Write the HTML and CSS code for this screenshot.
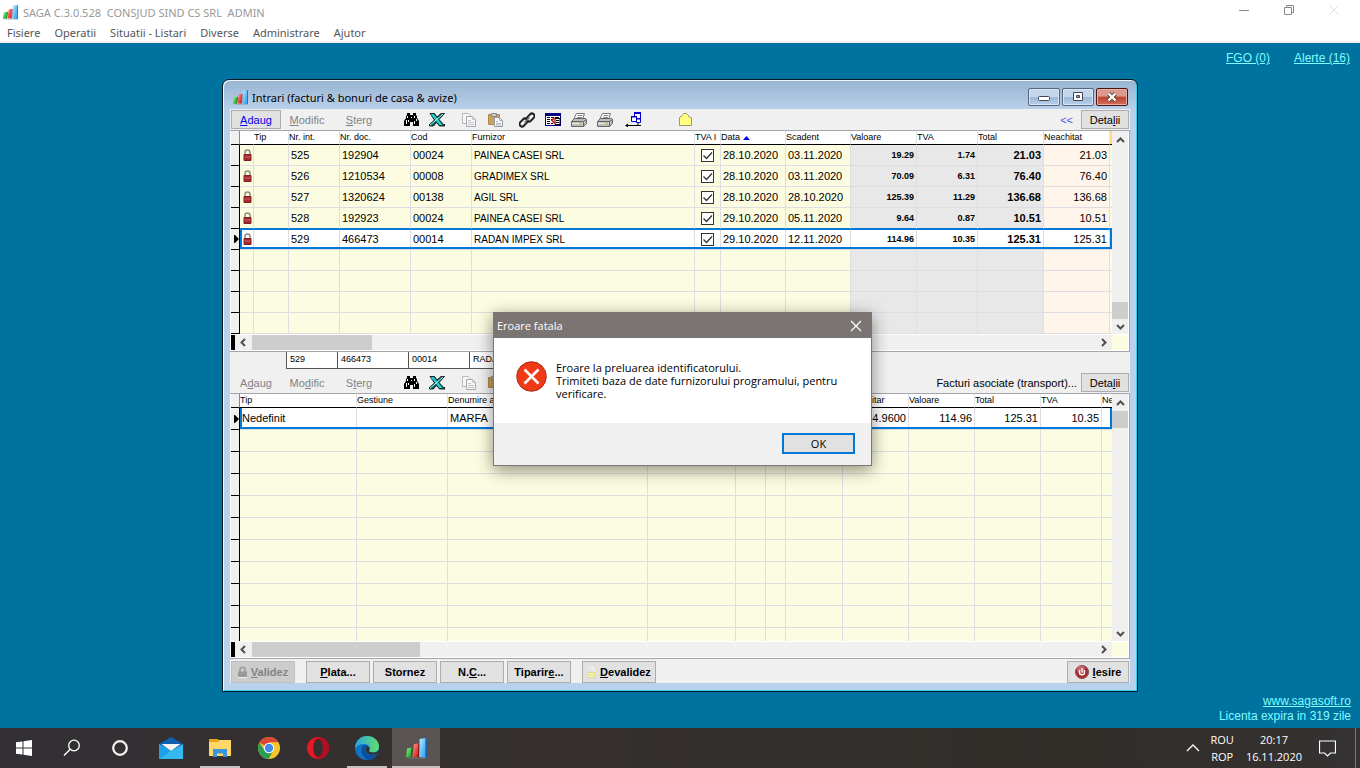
FILE: index.html
```html
<!DOCTYPE html>
<html lang="ro">
<head>
<meta charset="utf-8">
<title>SAGA C.3.0.528</title>
<link rel="stylesheet" href="styles.css">
</head>
<body>
<svg class="defs" aria-hidden="true">
  <defs>
    <linearGradient id="gb" x1="0" y1="0" x2="1" y2="1"><stop offset="0" stop-color="#c4f0ff"/><stop offset=".5" stop-color="#6cc4f8"/><stop offset="1" stop-color="#2c9cf0"/></linearGradient>
    <linearGradient id="gr" x1="0" y1="0" x2="1" y2="1"><stop offset="0" stop-color="#ffa090"/><stop offset="1" stop-color="#d80f12"/></linearGradient>
    <linearGradient id="gg" x1="0" y1="0" x2="1" y2="1"><stop offset="0" stop-color="#8bf08b"/><stop offset="1" stop-color="#0ba01d"/></linearGradient>
    <linearGradient id="ge" x1="0" y1="0" x2="1" y2="0"><stop offset="0" stop-color="#2aa5e0"/><stop offset="1" stop-color="#5fe06a"/></linearGradient>
  </defs>
  <symbol id="saga" viewBox="0 0 20 20">
    <path d="M1 10l4.500-1-.5 9-5 .500z" fill="url(#gg)"/><path d="M5.500 9l1 .7L5.500 18H4.500z" fill="#066b14"/>
    <path d="M7.500 6l4.500-1-.8 13H6z" fill="url(#gr)"/><path d="M12 5l1 .7-.8 12.300h-1z" fill="#8d0c10"/>
    <path d="M13 1L18.700 0v19l-6.200-.8z" fill="url(#gb)"/><path d="M18.700 0l1.100.8V19h-1.100z" fill="#1464b4"/>
    <path d="M1 18.500h12l5 .500v1H5z" fill="#8a8a8a" opacity=".4"/>
  </symbol>
  <symbol id="bino" viewBox="0 0 15 13"><path d="M3 0h3v2h3V0h3v2l1 1v2l2 3v5H9V9H6v4H0V8l2-3V3l1-1z" fill="#000"/><path d="M3 3h1v2H3zM10 3h1v2h-1zM2 7h1v4H2zM4 7h1v2H4zM10 8h1v3h-1zM7 4h1v1H7zM12 6h1v2h-1z" fill="#fff"/></symbol>
  <symbol id="xls" viewBox="0 0 16 14"><path d="M1 .500h4.500L8 4l4-3.500h3.500L10 6.500l4.500 5H16v1.500h-5.500L7.500 9.500 4.500 13H.5V11.500L5.500 7z" fill="#0b6060" stroke="#000" stroke-width=".8"/><path d="M1.500 1h3l9 11h-3z" fill="#23d3d3"/><path d="M14 1L1 12.300" stroke="#b6ffff" stroke-width="1"/></symbol>
  <symbol id="copy" viewBox="0 0 14 14"><path d="M.5.500h6l2 2v8h-8z" fill="#f6f6f6" stroke="#b9b9b9"/><path d="M4.500 3.500h6l3 3v7h-9z" fill="#f8f8f8" stroke="#a8a8a8"/><path d="M10.500 3.500v3h3M6 7.500h3M6 9.500h6M6 11.500h6" stroke="#b9c6d2" fill="none"/></symbol>
  <symbol id="paste" viewBox="0 0 15 14"><path d="M.5 1.500h11v10H.5z" fill="#c8a060" stroke="#b08a4a"/><path d="M3.500.500h5v3h-5z" fill="#ccc" stroke="#888"/><path d="M6.500 4.500h5l3 3v6h-8z" fill="#f8f8f8" stroke="#999"/><path d="M11.500 4.500v3h3M8 8.500h2M8 10.500h5M8 12h5" stroke="#a9b6c2" fill="none"/></symbol>
  <symbol id="link" viewBox="0 0 16 16"><g fill="none" stroke="#222" stroke-width="2"><rect x="7" y="3" width="9" height="5" rx="2.500" transform="rotate(-45 11.500 5.500)"/><rect x="0" y="8" width="9" height="5" rx="2.500" transform="rotate(-45 4.500 10.500)"/></g><path d="M5.500 10.500l5-5" stroke="#777" stroke-width="1.400"/></symbol>
  <symbol id="form" viewBox="0 0 16 13"><path d="M0 0h16v13H0z" fill="#000080"/><path d="M1 3h14v9H1z" fill="#fff"/><path d="M2 4h3v1H2zM6 4h3v1H6zM2 6h3v1H2zM6 6h2v1H6zM2 8h3v1H2zM2 10h3v1H2zM6 10h2v1H6zM10 4h4v1h-4z" fill="#000"/><path d="M10 5.500h5v6h-5z" fill="#fff" stroke="#000"/><path d="M11 7h3v1h-3zM11 9h3v1h-3z" fill="#000"/><path d="M9.500 4.500L7 7.500l3 3" fill="none" stroke="#e01010" stroke-width="1.600"/></symbol>
  <symbol id="print" viewBox="0 0 16 14"><path d="M5.500.500h8l-2 6h-9z" fill="#fff" stroke="#777"/><path d="M6.500 2.500h5M6 4.500h5" stroke="#888"/><path d="M.5 8.500l3-3h11l1 1v4l-3 3H.5z" fill="#bcbcbc" stroke="#666"/><path d="M1 8.500h11.500l3-2M12.500 8.500v5" fill="none" stroke="#666"/><path d="M1 10.500h11" stroke="#eee"/><path d="M8 10h3v1H8z" fill="#d8c020"/></symbol>
  <symbol id="net" viewBox="0 0 17 15"><path d="M9.500.500h6v6h-6z" fill="#fff" stroke="#0000d0"/><path d="M9 0h7v2H9z" fill="#0000d0"/><path d="M6.500 4.500h5v5h-5zM11.500 6.500h4v4h-4z" fill="#fff" stroke="#0000d0"/><path d="M6 4h6v1.500H6zM11 6h5v1.500h-5z" fill="#0000d0"/><path d="M2 13.500h14" stroke="#000"/><path d="M0 13.500l3-2v4z" fill="#000"/><path d="M13 11v2" stroke="#000"/></symbol>
  <symbol id="folder" viewBox="0 0 13 13"><path d="M.5 12.500v-8l2-1 1-2 1-1h3l2 2v1l2 1h1v8z" fill="#ffff80" stroke="#999974"/></symbol>
  <symbol id="lock" viewBox="0 0 9 12"><path d="M2 6V3.500C2 .3 7 .3 7 3.500V6" fill="none" stroke="#8b907c" stroke-width="1.500"/><path d="M1 5.500h7v6H1z" fill="#a8282c" stroke="#7f2022"/><path d="M1.500 8h6" stroke="#c86568"/></symbol>
  <symbol id="chev" viewBox="0 0 9 6"><path d="M1 5l3.500-3.500L8 5" fill="none" stroke="#505050" stroke-width="2"/></symbol>
  <symbol id="chevr" viewBox="0 0 6 9"><path d="M1 1l3.500 3.500L1 8" fill="none" stroke="#505050" stroke-width="2"/></symbol>
  <symbol id="ptr" viewBox="0 0 5 8"><path d="M0 0l1 0 4 4-4 4H0z" fill="#000"/></symbol>
</svg>

<header class="app-head">
  <div class="app-title">
    <svg width="15" height="15"><use href="#saga"/></svg>
    <span>SAGA C.3.0.528&nbsp; CONSJUD SIND CS SRL&nbsp; ADMIN</span>
    <div class="app-controls">
      <button aria-label="Minimizare"><svg width="12" height="12"><path d="M1 6.500h10" stroke="#888"/></svg></button>
      <button aria-label="Restaurare"><svg width="12" height="12"><path d="M1.500 3.500h7v7h-7zM3.500 3V1.500h7v7H9" fill="none" stroke="#888"/></svg></button>
      <button aria-label="Inchidere"><svg width="12" height="12"><path d="M1 1l10 10M11 1L1 11" stroke="#e2e2e2"/></svg></button>
    </div>
  </div>
  <nav class="menu">
    <button>Fisiere</button><button>Operatii</button><button>Situatii - Listari</button><button>Diverse</button><button>Administrare</button><button>Ajutor</button>
  </nav>
</header>

<main class="desk">
  <div class="alerts"><a href="#fgo">FGO (0)</a><a href="#alerte">Alerte (16)</a></div>

  <section class="win">
    <div class="win-title">
      <svg width="15" height="15"><use href="#saga"/></svg>
      <h1>Intrari (facturi &amp; bonuri de casa &amp; avize)</h1>
      <div class="win-controls">
        <button aria-label="Minimizare"><svg width="12" height="10"><rect x=".5" y="4.500" width="11" height="4" rx="1" fill="#fff" stroke="#445"/></svg></button>
        <button aria-label="Maximizare"><svg width="12" height="10"><path d="M1.500.500h9v8h-9z" fill="#fff" stroke="#445"/><path d="M4.500 3.500h3v2h-3z" fill="#7d9cc4" stroke="#445"/></svg></button>
        <button class="close" aria-label="Inchidere"><svg width="12" height="10"><path d="M2.500 1.500l7 7M9.500 1.500l-7 7" stroke="#543" stroke-width="4"/><path d="M2.500 1.500l7 7M9.500 1.500l-7 7" stroke="#fff" stroke-width="2.400"/></svg></button>
      </div>
    </div>

    <div class="win-body">
      <div class="tools">
        <button class="raised blue"><u>A</u>daug</button>
        <button class="flat" disabled><u>M</u>odific</button>
        <button class="flat" disabled><u>S</u>terg</button>
        <div class="icons">
          <button aria-label="Cauta"><svg width="15" height="13"><use href="#bino"/></svg></button>
          <button aria-label="Excel"><svg width="16" height="14"><use href="#xls"/></svg></button>
          <button class="sep" aria-label="Copiere"><svg width="14" height="14"><use href="#copy"/></svg></button>
          <button aria-label="Lipire"><svg width="15" height="14"><use href="#paste"/></svg></button>
          <button class="sep" aria-label="Legatura"><svg width="16" height="16"><use href="#link"/></svg></button>
          <button aria-label="Formular"><svg width="16" height="13"><use href="#form"/></svg></button>
          <button aria-label="Tiparire"><svg width="16" height="14"><use href="#print"/></svg></button>
          <button aria-label="Tiparire lista"><svg width="16" height="14"><use href="#print"/></svg></button>
          <button class="net" aria-label="Retea"><svg width="17" height="15"><use href="#net"/></svg></button>
          <button class="far" aria-label="Dosar"><svg width="13" height="13"><use href="#folder"/></svg></button>
        </div>
        <a class="back" href="#inapoi">&lt;&lt;</a>
        <button class="raised details">Deta<u>l</u>ii</button>
      </div>

      <div class="grid">
        <div class="pane">
          <table class="t1">
            <colgroup><col class="c-mark"><col class="w14"><col class="w35"><col class="w51"><col class="w71"><col class="w61"><col><col class="w26"><col class="w65"><col class="w65"><col class="w66"><col class="w61"><col class="w66"><col class="w66"><col class="w2"></colgroup>
            <thead><tr><th></th><th class="nb"></th><th>Tip</th><th>Nr. int.</th><th>Nr. doc.</th><th>Cod</th><th>Furnizor</th><th>TVA I</th><th>Data <svg width="7" height="4"><path d="M0 4l3.500-4L7 4z" fill="#0000f0"/></svg></th><th>Scadent</th><th>Valoare</th><th>TVA</th><th>Total</th><th>Neachitat</th><th class="more"></th></tr></thead>
            <tbody>
              <tr><th></th><td><svg width="9" height="12"><use href="#lock"/></svg></td><td></td><td>525</td><td>192904</td><td>00024</td><td class="nm">PAINEA CASEI SRL</td><td class="ck"><input type="checkbox" checked aria-label="TVA la incasare 525"></td><td class="dt">28.10.2020</td><td class="dt">03.11.2020</td><td class="g s">19.29</td><td class="g s">1.74</td><td class="g b">21.03</td><td class="p">21.03</td><td></td></tr>
              <tr><th></th><td><svg width="9" height="12"><use href="#lock"/></svg></td><td></td><td>526</td><td>1210534</td><td>00008</td><td class="nm">GRADIMEX SRL</td><td class="ck"><input type="checkbox" checked aria-label="TVA la incasare 526"></td><td class="dt">28.10.2020</td><td class="dt">03.11.2020</td><td class="g s">70.09</td><td class="g s">6.31</td><td class="g b">76.40</td><td class="p">76.40</td><td></td></tr>
              <tr><th></th><td><svg width="9" height="12"><use href="#lock"/></svg></td><td></td><td>527</td><td>1320624</td><td>00138</td><td class="nm">AGIL SRL</td><td class="ck"><input type="checkbox" checked aria-label="TVA la incasare 527"></td><td class="dt">28.10.2020</td><td class="dt">28.10.2020</td><td class="g s">125.39</td><td class="g s">11.29</td><td class="g b">136.68</td><td class="p">136.68</td><td></td></tr>
              <tr class="before"><th></th><td><svg width="9" height="12"><use href="#lock"/></svg></td><td></td><td>528</td><td>192923</td><td>00024</td><td class="nm">PAINEA CASEI SRL</td><td class="ck"><input type="checkbox" checked aria-label="TVA la incasare 528"></td><td class="dt">29.10.2020</td><td class="dt">05.11.2020</td><td class="g s">9.64</td><td class="g s">0.87</td><td class="g b">10.51</td><td class="p">10.51</td><td></td></tr>
              <tr class="sel"><th><svg width="5" height="8"><use href="#ptr"/></svg></th><td><svg width="9" height="12"><use href="#lock"/></svg></td><td></td><td>529</td><td>466473</td><td>00014</td><td class="nm">RADAN IMPEX SRL</td><td class="ck"><input type="checkbox" checked aria-label="TVA la incasare 529"></td><td class="dt">29.10.2020</td><td class="dt">12.11.2020</td><td class="g s">114.96</td><td class="g s">10.35</td><td class="g b">125.31</td><td class="p">125.31</td><td></td></tr>
            </tbody>
            <tbody data-blank="4" data-classes=",,,,,,,,,g,g,g,p,"></tbody>
          </table>
        </div>
        <div class="vbar"><svg width="9" height="6"><use href="#chev"/></svg><i class="grow"></i><i class="thumb"></i><svg class="down" width="9" height="6"><use href="#chev"/></svg></div>
        <div class="hbar"><i class="split"></i><svg class="left" width="6" height="9"><use href="#chevr"/></svg><i class="thumb"></i><svg class="right" width="6" height="9"><use href="#chevr"/></svg></div>
        <i class="corner"></i>
      </div>

      <div class="summary"><span class="w51">529</span><span class="w71">466473</span><span class="w61">00014</span><span class="rest">RADAN IMPEX SRL</span></div>

      <div class="tools second">
        <button class="flat first" disabled>A<u>d</u>aug</button>
        <button class="flat" disabled>Mo<u>d</u>ific</button>
        <button class="flat" disabled>S<u>t</u>erg</button>
        <div class="icons">
          <button aria-label="Cauta"><svg width="15" height="13"><use href="#bino"/></svg></button>
          <button aria-label="Excel"><svg width="16" height="14"><use href="#xls"/></svg></button>
          <button class="sep" aria-label="Copiere"><svg width="14" height="14"><use href="#copy"/></svg></button>
          <button aria-label="Lipire"><svg width="15" height="14"><use href="#paste"/></svg></button>
        </div>
        <span class="assoc">Facturi asociate (transport)...</span>
        <button class="raised details">Deta<u>l</u>ii</button>
      </div>

      <div class="grid two">
        <div class="pane">
          <table class="t2">
            <colgroup><col class="c-mark"><col class="w117"><col class="w91"><col><col class="w88"><col class="w30"><col class="w20"><col class="w57"><col class="w66"><col class="w66"><col class="w66"><col class="w61"><col class="w10"></colgroup>
            <thead><tr><th></th><th>Tip</th><th>Gestiune</th><th>Denumire articol</th><th></th><th></th><th></th><th></th><th>Pret unitar</th><th>Valoare</th><th>Total</th><th>TVA</th><th>Ne</th></tr></thead>
            <tbody>
              <tr class="sel"><th><svg width="5" height="8"><use href="#ptr"/></svg></th><td>Nedefinit</td><td></td><td>MARFA</td><td></td><td></td><td></td><td></td><td class="n">114.9600</td><td class="n">114.96</td><td class="n">125.31</td><td class="n">10.35</td><td></td></tr>
            </tbody>
            <tbody data-blank="10" data-classes=",,,,,,,,,,,"></tbody>
          </table>
        </div>
        <div class="vbar"><svg width="9" height="6"><use href="#chev"/></svg><i class="thumb"></i><i class="grow"></i><svg class="down" width="9" height="6"><use href="#chev"/></svg></div>
        <div class="hbar"><i class="split"></i><svg class="left" width="6" height="9"><use href="#chevr"/></svg><i class="thumb"></i><svg class="right" width="6" height="9"><use href="#chevr"/></svg></div>
        <i class="corner"></i>
      </div>

      <div class="actions">
        <button class="dis" disabled><svg width="9" height="12"><path d="M2 6V3.500c0-3 5-3 5 0V6" fill="none" stroke="#999" stroke-width="1.500"/><path d="M0 5.500h9V11H0z" fill="#999"/><path d="M0 11.500h9" stroke="#eee"/></svg><span><u>V</u>alidez</span></button>
        <button class="gapl"><span><u>P</u>lata...</span></button>
        <button><span>Stornez</span></button>
        <button><span>N.<u>C</u>...</span></button>
        <button><span>Tiparir<u>e</u>...</span></button>
        <button class="gapl wide"><svg width="9" height="11"><path d="M2 3c0-3 5-3 5 0v2" fill="none" stroke="#f4f4e0" stroke-width="1.500"/><path d="M1 5.500h7v5H1zM2 8h5" fill="#f2f2d0" stroke="#e0dc78"/></svg><span><u>D</u>evalidez</span></button>
        <button class="exit"><svg width="14" height="14"><circle cx="7" cy="7" r="6.500" fill="#a82e36" stroke="#8d4348"/><circle cx="6" cy="4.500" r="4" fill="#d98a90" opacity=".6"/><path d="M4.500 5v2.500c0 3 5 3 5 0V5M7 3v4.500" fill="none" stroke="#fff" stroke-width="1.300"/></svg><span><u>I</u>esire</span></button>
      </div>
    </div>
  </section>

  <div class="license"><a href="#site">www.sagasoft.ro</a><span>Licenta expira in 319 zile</span></div>

  <section class="dialog" role="dialog" aria-labelledby="dlg-title">
    <div class="dlg-title"><h2 id="dlg-title">Eroare fatala</h2><button aria-label="Inchidere"><svg width="12" height="12"><path d="M1 1l10 10M11 1L1 11" stroke="#fff" stroke-width="1.200"/></svg></button></div>
    <div class="dlg-body">
      <svg width="31" height="31" viewBox="0 0 31 31"><circle cx="15.500" cy="15.500" r="14.800" fill="#f03a17" stroke="#a9301a"/><path d="M8.500 8.500l14 14M22.500 8.500l-14 14" stroke="#fff" stroke-width="2.600"/></svg>
      <p>Eroare la preluarea identificatorului.<br>Trimiteti baza de date furnizorului programului, pentru<br>verificare.</p>
    </div>
    <div class="dlg-foot"><button>OK</button></div>
  </section>
</main>

<footer class="taskbar">
  <button aria-label="Start"><svg width="16" height="16"><path d="M0 2.300l6.500-.9v6.100H0zM7.500 1.200L16 0v7.500H7.500zM0 8.500h6.500v6.100L0 13.700zM7.500 8.500H16V16l-8.500-1.200z" fill="#fff"/></svg></button>
  <button aria-label="Cautare"><svg width="18" height="18"><circle cx="11" cy="6.500" r="5.300" fill="none" stroke="#fff" stroke-width="1.300"/><path d="M7.200 10.300L1 16.500" stroke="#fff" stroke-width="1.400"/></svg></button>
  <button aria-label="Cortana"><svg width="18" height="18"><circle cx="9" cy="9" r="6.800" fill="none" stroke="#f4f4f4" stroke-width="2.200"/></svg></button>
  <div class="tasks">
    <button aria-label="Mail"><svg width="24" height="24"><path d="M0 8l12-7 12 7v6H0z" fill="#0f5fae"/><path d="M0 8l12 7L24 8v15H0z" fill="#35b8f0"/><path d="M2.500 8h19L12 15z" fill="#f4f4f4"/><path d="M0 8l12 7L0 23z" fill="#1f9fe6"/></svg></button>
    <button class="open" aria-label="Explorer"><svg width="22" height="20"><path d="M0 1h9l1 2v15H0z" fill="#e8a712"/><path d="M0 4h9l1-2h12v16H0z" fill="#ffd869"/><path d="M4 11h14v8h-4v-3.500H8V19H4z" fill="#3b97dd"/></svg></button>
    <button aria-label="Chrome"><svg width="22" height="22" viewBox="0 0 22 22"><circle cx="11" cy="11" r="11" fill="#f7c629"/><path d="M11 11L1.500 5.500A11 11 0 0 1 20.500 5.500H11z" fill="#db4437"/><path d="M1.500 5.500A11 11 0 0 0 10.500 22L15.500 13.500 11 11 6.500 13.500z" fill="#2a9d58"/><path d="M11 5.500h9.500L16 13.500z" fill="#f7c629"/><circle cx="11" cy="11" r="5.200" fill="#fff"/><circle cx="11" cy="11" r="4.200" fill="#4688f1"/></svg></button>
    <button aria-label="Opera"><svg width="22" height="22"><circle cx="11" cy="11" r="11" fill="#e81828"/><path d="M7.500 3.500C10 0 14 0 16 1.300c8 4 8 15.400 0 19.400-2 1.300-6 1.300-8.500-2z" fill="#b01022"/><ellipse cx="11" cy="11" rx="4.800" ry="8.500" fill="#33302f"/></svg></button>
    <button class="open" aria-label="Edge"><svg width="24" height="24"><circle cx="12" cy="12" r="12" fill="#1173c8"/><path d="M.2 10C1.500 4 6 0 12 0c7 0 12 5 12 10.500 0 4-3 6-6.500 6-3 0-4-1-3-2.500C16 11 13 8 9.500 8 5 8 1 10 .2 13z" fill="url(#ge)"/><path d="M9 9c-4 3-4 11 4 14.800 4 .200 8-2.800 9.500-6-5 3-12 1-12-4 0-2 1-3 2-4-1-1-2.500-1-3.500-.8z" fill="#0b4f9c"/><path d="M12.500 10c2 1 2.500 2.800 1.500 4.300-.8 1.500 2 2.500 5 2.200 2 0 4-1 5-2.500 0 2-1 3-2 4-5 2-11 0-11.300-4.300 0-1.500.8-2.700 1.800-3.700z" fill="#33302f"/></svg></button>
    <button class="open active" aria-label="SAGA"><svg width="21" height="21"><use href="#saga"/></svg></button>
  </div>
  <div class="tray">
    <svg width="14" height="8"><path d="M1 7l6-6 6 6" fill="none" stroke="#fff" stroke-width="1.300"/></svg>
    <div class="lang"><span>ROU</span><span>ROP</span></div>
    <div class="clock"><span>20:17</span><span>16.11.2020</span></div>
    <svg class="note" width="17" height="17"><path d="M.5 1h16v12h-5l-3 3-3-3h-5z" fill="none" stroke="#fff" stroke-width="1.200"/></svg>
  </div>
</footer>
<script src="script.js"></script>
</body>
</html>
```
FILE: styles.css
```css
* { box-sizing: border-box; }
body { margin: 0; min-height: 100vh; display: flex; flex-direction: column; background: #0072a0; font-family: "Liberation Sans", Arial, sans-serif; font-size: 11px; color: #000; overflow: hidden; }
button { font: inherit; color: inherit; border: 0; padding: 0; background: none; display: flex; align-items: center; justify-content: center; white-space: nowrap; }
h1, h2, p { margin: 0; font-weight: normal; }
svg { display: block; flex: none; }
.defs { position: absolute; width: 0; height: 0; }

.app-head { background: #fff; border-bottom: 2px solid #f0f0f0; font-family: "Noto Sans", "Open Sans", sans-serif; font-size: 11px; }
.app-title { display: flex; align-items: center; gap: 5px; height: 24px; padding-left: 3px; color: #999; }
.app-controls { display: flex; margin-left: auto; padding: 0 4px 4px 0; }
.app-controls button { width: 45px; }
.menu { display: flex; gap: 14px; height: 17px; padding-left: 7px; color: #555; }

.desk { position: relative; flex: 1; }
.alerts { display: flex; justify-content: flex-end; gap: 24px; padding: 8px 10px; font-size: 12px; }
.alerts a, .license { color: #7ffcff; }
.license { position: absolute; right: 9px; bottom: 4px; display: flex; flex-direction: column; align-items: flex-end; font-size: 12px; line-height: 15px; }
.license a { color: inherit; }

.win { position: absolute; left: 222px; right: 222px; top: 36px; padding: 0 7px 8px; border: 1px solid #0a1a22; border-radius: 7px 7px 0 0; background: linear-gradient(#98b4d2, #b9d1ea 30px); box-shadow: inset 1px 1px #eef5fb, inset -1px -1px #2fd2ea; }
.win-title { display: flex; align-items: center; gap: 4px; height: 29px; padding: 5px 2px 0 3px; }
.win-title h1 { font-family: "Noto Sans", "Open Sans", sans-serif; font-size: 11px; }
.win-controls { display: flex; gap: 2px; margin-left: auto; }
.win-controls button { width: 32px; height: 18px; border: 1px solid #56667c; border-radius: 2px; background: linear-gradient(#c3d6ec 50%, #9db9d8 50%, #b7d0ea); box-shadow: inset 0 0 0 1px #d7e5f4; }
.win-controls .close { border-color: #4f1414; background: linear-gradient(#dc9a8e 45%, #bc4030 50%, #d0705a); box-shadow: inset 0 0 0 1px #e5b0a5; }
.win-body { background: #f0f0f0; }

.tools { display: flex; align-items: center; height: 21px; padding: 1px; }
.raised { height: 19px; border: 1px solid #adadad; background: #e1e1e1; }
.blue { width: 50px; color: #0000e8; }
.details { width: 48px; }
.flat { width: 52px; color: #838383; }
.flat.first { width: 50px; }
.icons { display: flex; flex: 1; padding-left: 13px; }
.icons button { width: 26px; height: 18px; }
.icons .sep { margin-left: 6px; }
.icons .net { width: 30px; }
.icons .far { margin-left: 24px; }
.back { color: #5050f0; text-decoration: none; margin-right: 8px; }
.assoc { margin-right: 4px; }
.second { margin-top: 3px; }

.grid { display: grid; grid-template-columns: 1fr 17px; border: solid #a5a5ad; border-width: 1px 1px 1px 0; padding-left: 1px; background: #fff; }
.pane { overflow: hidden; background: #fcfce0; }
table { table-layout: fixed; width: 100%; border-spacing: 0; }
.c-mark { width: 9px; } .w14 { width: 14px; } .w35 { width: 35px; } .w51 { width: 51px; } .w71 { width: 71px; } .w61 { width: 61px; } .w26 { width: 26px; } .w65 { width: 65px; } .w66 { width: 66px; } .w2 { width: 2px; }
.w117 { width: 117px; } .w91 { width: 91px; } .w88 { width: 88px; } .w30 { width: 30px; } .w20 { width: 20px; } .w57 { width: 57px; } .w10 { width: 10px; }
thead th { height: 14px; padding: 0; background: #fff; border-bottom: 1px solid #000; border-right: 1px solid #e4e4e4; text-align: left; font-weight: normal; font-size: 9px; line-height: 13px; white-space: nowrap; overflow: hidden; }
thead th:first-child { background: #f0f0f0; border-right-color: #888; }
thead th:last-child { border-right: 0; }
thead th svg { display: inline-block; }
thead .nb { border-right-color: #fff; }
thead .more { background: #ffd98c; }
tbody th { padding: 0; background: #f0f0f0; border-right: 1px solid #000; border-bottom: 1px solid #000; }
tbody th svg { margin-left: auto; }
td { height: 21px; padding: 0 2px; background: #fcfce0; border: solid #dedee2; border-width: 0 1px 1px 0; white-space: nowrap; overflow: hidden; line-height: 15px; }
td:last-child { border-right: 0; }
.two td { height: 22px; }
td svg { margin-left: 1px; }
.ck { padding: 0 0 0 6px; }
.nm { font-size: 10px; }
.g { background: #e8e8e8; text-align: right; font-weight: bold; }
.s { font-size: 9px; }
.p { background: #fff5ea; text-align: right; }
.n { text-align: right; }
.before td { border-bottom-color: #0078d7; }
.sel td { --top: inset 0 1px #0078d7; background: #fff; border-right: 0; padding-right: 3px; box-shadow: var(--top), inset 0 -2px #0078d7, inset -1px 0 #dedee2; }
.two .sel td { --top: inset 0 0 #0078d7; }
.sel td:nth-child(2) { box-shadow: var(--top), inset 0 -2px #0078d7, inset 2px 0 #0078d7, inset -1px 0 #dedee2; }
.sel td:last-child { padding: 0; box-shadow: var(--top), inset 0 -2px #0078d7, inset -2px 0 #0078d7; }
.two tbody:last-child tr:last-child > * { height: 13px; border-bottom: 0; }
input[type=checkbox] { appearance: none; display: block; width: 13px; height: 13px; margin: 0; border: 1px solid #333; background: #fff url("data:image/svg+xml,%3Csvg xmlns='http://www.w3.org/2000/svg' width='11' height='11'%3E%3Cpath d='M1.500 5.500l3 3 5.500-6' fill='none' stroke='%23333' stroke-width='1.300'/%3E%3C/svg%3E"); }

.vbar { display: flex; flex-direction: column; align-items: center; background: #f0f0f0; border-right: 1px solid #fff; padding: 6px 0 4px; }
.vbar .grow { flex: 1; }
.vbar .thumb { width: 100%; height: 17px; background: #cdcdcd; margin: 5px 0; }
.down { transform: rotate(180deg); }
.hbar { display: flex; align-items: center; height: 17px; background: #f0f0f0; border: solid #fff; border-width: 1px 0; }
.split { width: 4px; height: 15px; background: #000; margin-right: 5px; }
.left { transform: rotate(180deg); }
.hbar .thumb { width: 120px; height: 15px; margin-left: 6px; background: #cdcdcd; }
.two .hbar .thumb { width: 168px; }
.right { margin-left: auto; margin-right: 5px; }
.corner { background: #fcfce0; border: solid #fff; border-width: 1px 1px 1px 0; }

.summary { display: flex; padding-left: 56px; font-size: 9px; line-height: 15px; }
.summary span { background: #fff; border: solid #555; border-width: 0 0 1px 1px; height: 17px; padding-left: 3px; }
.summary .rest { width: 223px; border-right-width: 1px; }

.actions { display: flex; gap: 3px; padding: 2px 1px 0; font-weight: bold; height: 24px; }
.actions button { width: 64px; height: 22px; gap: 4px; border: 1px solid #adadad; background: #e1e1e1; }
.actions .gapl { margin-left: 8px; }
.actions .wide { width: 74px; }
.actions .exit { width: 62px; margin-left: auto; }
.actions .dis { color: #838383; background: #ccc; border-color: #bfbfbf; }

.dialog { position: absolute; left: 493px; top: 269px; width: 379px; border: 1px solid #7d7674; background: #fff; box-shadow: 0 4px 16px rgba(0, 0, 0, .45); font-family: "Open Sans", "Noto Sans", sans-serif; }
.dlg-title { display: flex; align-items: center; justify-content: space-between; height: 25px; padding: 0 9px 0 3px; background: #7a7473; color: #fff; }
.dlg-title h2 { font-size: 11px; }
.dlg-body { display: flex; gap: 9px; height: 85px; padding: 23px 22px 0; line-height: 13px; white-space: nowrap; }
.dlg-foot { display: flex; justify-content: flex-end; padding: 10px 16px 11px; background: #f0f0f0; }
.dlg-foot button { width: 73px; height: 21px; border: 2px solid #0078d7; background: #e1e1e1; }

.taskbar { display: flex; height: 40px; background: linear-gradient(90deg, #333035, #35302d 40%, #312d29 80%, #343232); color: #fff; position: relative; }
.taskbar button { width: 48px; }
.tasks { display: flex; gap: 1px; margin-left: 3px; }
.tasks .open { background: linear-gradient(#c8c0c0, #c8c0c0) center bottom / 40px 2px no-repeat; }
.tasks .active { background-color: #5a5452; background-size: 48px 2px; }
.tray { display: flex; align-items: center; margin: 0 4px 0 auto; padding-right: 19px; border-right: 1px solid #777; font-family: "Open Sans", "Noto Sans", sans-serif; font-size: 11px; line-height: 17px; }
.lang, .clock { display: flex; flex-direction: column; align-items: center; }
.lang { margin-left: 11px; }
.clock { margin: 0 17px 0 12px; }
```
FILE: script.js
```javascript
document.querySelectorAll("tbody[data-blank]").forEach(function (body) {
  var classes = body.dataset.classes.split(",");
  for (var i = 0; i < Number(body.dataset.blank); i++) {
    var row = document.createElement("tr");
    row.appendChild(document.createElement("th"));
    classes.forEach(function (name) {
      var cell = document.createElement("td");
      if (name) cell.className = name;
      row.appendChild(cell);
    });
    body.appendChild(row);
  }
});
```
